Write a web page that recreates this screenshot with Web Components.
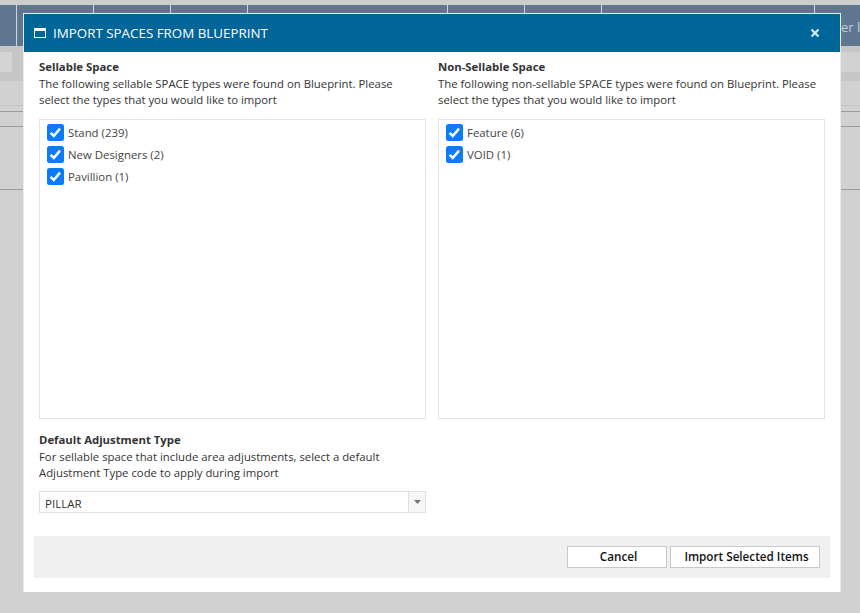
<!DOCTYPE html>
<html lang="en">
<head>
  <meta charset="UTF-8">
  <title>Import Spaces From Blueprint</title>
  <style>
    html, body { margin: 0; height: 100%; overflow: hidden; background: #cecece; }
    body { font-family: "Open Sans", "Noto Sans", sans-serif; font-size: 11.35px; }
  </style>
</head>
<body>

  <!-- Greyed out application behind the dialog -->
  <app-backdrop></app-backdrop>

  <import-dialog heading="IMPORT SPACES FROM BLUEPRINT">
    <div slot="left">
      <space-section heading="Sellable Space" text="The following sellable SPACE types were found on Blueprint. Please select the types that you would like to import"></space-section>
      <check-list>
        <check-item>Stand (239)</check-item>
        <check-item>New Designers (2)</check-item>
        <check-item>Pavillion (1)</check-item>
      </check-list>
    </div>
    <div slot="right">
      <space-section heading="Non-Sellable Space" text="The following non-sellable SPACE types were found on Blueprint. Please select the types that you would like to import"></space-section>
      <check-list>
        <check-item>Feature (6)</check-item>
        <check-item>VOID (1)</check-item>
      </check-list>
    </div>
    <div slot="bottom">
      <space-section heading="Default Adjustment Type" text="For sellable space that include area adjustments, select a default Adjustment Type code to apply during import"></space-section>
      <combo-box value="PILLAR"></combo-box>
    </div>
    <dialog-button slot="actions" style="width:100px">Cancel</dialog-button>
    <dialog-button slot="actions" style="width:150px">Import Selected Items</dialog-button>
  </import-dialog>

  <script>
    class AppBackdrop extends HTMLElement {
      constructor() {
        super();
        this.attachShadow({ mode: 'open' });
        this.shadowRoot.innerHTML = `
          <style>
            :host { display: block; position: absolute; inset: 0; overflow: hidden; background: #d1d1d1; }
            .top { position: absolute; left: 0; right: 0; top: 0; height: 5px; background: #cdcdcd; }
            .bar { position: absolute; left: 0; right: 0; top: 5px; height: 41px; background: #5f7690; display: flex; }
            .bar i { height: 100%; border-right: 1px solid #cfd5dc; box-sizing: border-box; flex: none; }
            .bar span { position: absolute; left: 841px; top: 13px; color: #c3d0dc; font-size: 13px; white-space: nowrap; }
            .strip { position: absolute; left: 0; right: 0; top: 46px; height: 35px; background: #c6c6c6; }
            .btn { position: absolute; left: 0; top: 52px; width: 12px; height: 20px; background: #d4d4d4; }
            .tool { position: absolute; left: 841px; right: 0; top: 52px; height: 20px; background: #d2d2d2; }
            .line { position: absolute; left: 0; right: 0; height: 1px; background: #9b9b9b; }
            .faint { position: absolute; left: 0; right: 0; top: 105px; height: 1px; background: #c4c4c4; }
          </style>
          <div class="top"></div>
          <div class="bar">
            <i style="width:17px"></i><i style="width:77px"></i><i style="width:77px"></i>
            <i style="width:77px"></i><i style="width:200px"></i><i style="width:77px"></i>
            <i style="width:77px"></i><i style="width:213px"></i>
            <span>er l</span>
          </div>
          <div class="strip"></div>
          <div class="btn"></div>
          <div class="tool"></div>
          <div class="faint"></div>
          <div class="line" style="top:111px"></div>
          <div class="line" style="top:126px"></div>
          <div class="line" style="top:189px"></div>
        `;
      }
    }

    class ImportDialog extends HTMLElement {
      constructor() {
        super();
        this.attachShadow({ mode: 'open' });
        this.shadowRoot.innerHTML = `
          <style>
            :host {
              display: flex; flex-direction: column; box-sizing: border-box;
              position: absolute; left: 23px; top: 13px; width: 818px; height: 579px;
              background: #fff; border: 1px solid #eaeaea; border-bottom: 0; color: #333;
            }
            header {
              flex: none; height: 38px; background: #006699; color: #fff;
              display: flex; align-items: center; padding: 0 20px 0 10px; gap: 7px;
              font-size: 13.37px;
            }
            header svg { flex: none; }
            .title { flex: 1; }
            .close { flex: none; }
            .body { flex: 1; padding: 8px 15px 0; display: flex; flex-direction: column; }
            .cols { display: grid; grid-template-columns: 387px 387px; column-gap: 12px; }
            .bottom { margin-top: 14px; width: 387px; }
            footer {
              flex: none; height: 42px; margin: 0 10px 14px; background: #f0f0f0;
              display: flex; justify-content: flex-end; align-items: center; gap: 3px; padding-right: 10px;
            }
          </style>
          <header>
            <svg width="12" height="10" viewBox="0 0 12 10"><path d="M0 0h12v10H0z" fill="#fff"/><path d="M1 3h10v6H1z" fill="#006699"/></svg>
            <span class="title"></span>
            <svg class="close" width="10" height="10" viewBox="0 0 10 10"><path d="M1.5 1.5l7 7M8.5 1.5l-7 7" stroke="#d4ecf7" stroke-width="2.2" fill="none"/></svg>
          </header>
          <div class="body">
            <div class="cols">
              <div><slot name="left"></slot></div>
              <div><slot name="right"></slot></div>
            </div>
            <div class="bottom"><slot name="bottom"></slot></div>
          </div>
          <footer><slot name="actions"></slot></footer>
        `;
        this.shadowRoot.querySelector('.title').textContent = this.getAttribute('heading');
      }
    }

    class SpaceSection extends HTMLElement {
      constructor() {
        super();
        this.attachShadow({ mode: 'open' });
        this.shadowRoot.innerHTML = `
          <style>
            :host { display: block; line-height: 16px; font-size: 11.35px; color: #333; }
            b { display: block; font-weight: 700; height: 15px; line-height: 14px; margin-bottom: 1px; }
          </style>
          <b></b><div></div>
        `;
        this.shadowRoot.querySelector('b').textContent = this.getAttribute('heading');
        this.shadowRoot.querySelector('div').textContent = this.getAttribute('text');
      }
    }

    class CheckList extends HTMLElement {
      constructor() {
        super();
        this.attachShadow({ mode: 'open' });
        this.shadowRoot.innerHTML = `
          <style>
            :host {
              display: flex; flex-direction: column; gap: 5px; box-sizing: border-box;
              height: 300px; margin-top: 11px; padding: 4px 7px;
              border: 1px solid #e3e3e3; background: #fff;
            }
          </style>
          <slot></slot>
        `;
      }
    }

    class CheckItem extends HTMLElement {
      constructor() {
        super();
        this.attachShadow({ mode: 'open' });
        this.shadowRoot.innerHTML = `
          <style>
            :host { display: flex; align-items: center; gap: 4px; height: 17px; font-size: 11.4px; color: #444; }
            svg { flex: none; }
          </style>
          <svg width="17" height="17" viewBox="0 0 17 17">
            <rect width="17" height="17" rx="2.5" fill="#0a7cfa"/>
            <path d="M3.6 8.8l3.2 3.2 6.2-7.4" fill="none" stroke="#fff" stroke-width="2.5"/>
          </svg>
          <span><slot></slot></span>
        `;
      }
    }

    class ComboBox extends HTMLElement {
      constructor() {
        super();
        this.attachShadow({ mode: 'open' });
        this.shadowRoot.innerHTML = `
          <style>
            :host {
              display: flex; box-sizing: border-box; height: 22px; margin-top: 10px;
              border: 1px solid #e0e0e0; background: #fff; font-size: 11.5px; color: #333;
            }
            .value { flex: 1; padding: 1px 0 0 5px; line-height: 22px; }
            .arrow {
              flex: none; width: 16px; background: #f6f6f6; border-left: 1px solid #e0e0e0;
              display: flex; align-items: center; justify-content: center;
            }
          </style>
          <div class="value"></div>
          <div class="arrow"><svg width="7" height="4" viewBox="0 0 7 4"><path d="M0 0h7L3.5 4z" fill="#777"/></svg></div>
        `;
        this.shadowRoot.querySelector('.value').textContent = this.getAttribute('value');
      }
    }

    class DialogButton extends HTMLElement {
      constructor() {
        super();
        this.attachShadow({ mode: 'open' });
        this.shadowRoot.innerHTML = `
          <style>
            :host {
              display: flex; align-items: center; justify-content: center; box-sizing: border-box;
              height: 22px; padding: 0 0 2px 3px; background: #fff; border: 1px solid #c8c8c8;
              font-size: 11.7px; font-weight: 600; color: #111;
            }
          </style>
          <slot></slot>
        `;
      }
    }

    customElements.define('app-backdrop', AppBackdrop);
    customElements.define('import-dialog', ImportDialog);
    customElements.define('space-section', SpaceSection);
    customElements.define('check-list', CheckList);
    customElements.define('check-item', CheckItem);
    customElements.define('combo-box', ComboBox);
    customElements.define('dialog-button', DialogButton);
  </script>

</body>
</html>
